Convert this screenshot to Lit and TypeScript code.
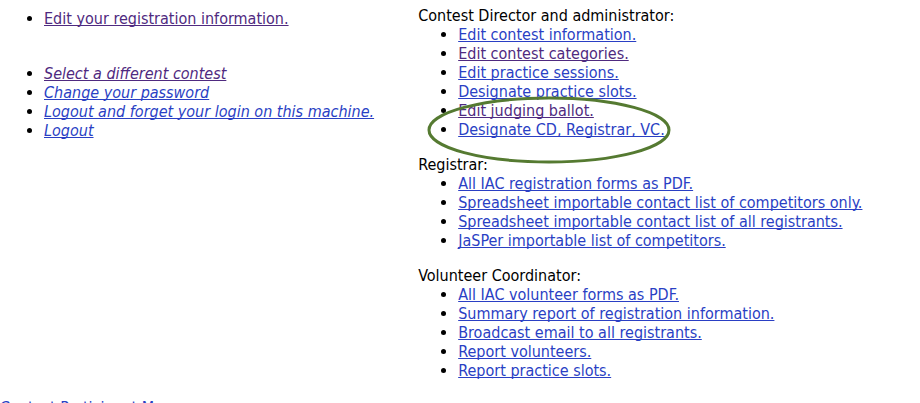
import { LitElement, html, css, svg } from "lit";
import { customElement } from "lit/decorators.js";

interface MenuLink {
  label: string;
  visited?: boolean;
}

const account: MenuLink[] = [{ label: "Edit your registration information.", visited: true }];

const session: MenuLink[] = [
  { label: "Select a different contest", visited: true },
  { label: "Change your password" },
  { label: "Logout and forget your login on this machine." },
  { label: "Logout" },
];

const director: MenuLink[] = [
  { label: "Edit contest information." },
  { label: "Edit contest categories.", visited: true },
  { label: "Edit practice sessions." },
  { label: "Designate practice slots." },
  { label: "Edit judging ballot.", visited: true },
  { label: "Designate CD, Registrar, VC." },
];

const registrar: MenuLink[] = [
  { label: "All IAC registration forms as PDF." },
  { label: "Spreadsheet importable contact list of competitors only." },
  { label: "Spreadsheet importable contact list of all registrants." },
  { label: "JaSPer importable list of competitors." },
];

const volunteer: MenuLink[] = [
  { label: "All IAC volunteer forms as PDF." },
  { label: "Summary report of registration information." },
  { label: "Broadcast email to all registrants." },
  { label: "Report volunteers." },
  { label: "Report practice slots." },
];

const highlight = html`<svg class="highlight" viewBox="0 0 244 68" aria-hidden="true">
  ${svg`<ellipse cx="122" cy="34" rx="120" ry="32" />`}
</svg>`;

@customElement("app-root")
export class AppRoot extends LitElement {
  static styles = css`
    :host {
      display: block;
      background: #fff;
      color: #000;
      font: 16px/19px "DejaVu Sans Condensed", Tahoma, sans-serif;
    }
    .columns {
      display: grid;
      grid-template-columns: 5fr 6fr;
    }
    .personal {
      padding-top: 9px;
    }
    .admin {
      padding-top: 6px;
    }
    .links {
      margin: 0;
      padding-left: 40px;
    }
    .personal .links {
      padding-left: 44px;
    }
    .session {
      margin-top: 36px;
      font-style: italic;
    }
    .group {
      position: relative;
      margin-bottom: 16px;
    }
    .title {
      margin: 0;
      font-size: 16px;
      font-weight: 400;
    }
    a {
      color: #2a3fc4;
      text-decoration: underline;
      text-decoration-thickness: 1px;
      text-decoration-skip-ink: none;
      text-underline-offset: 1px;
    }
    a.visited {
      color: #4f2a80;
    }
    .highlight {
      position: absolute;
      left: 9px;
      bottom: -25px;
      width: 244px;
      height: 68px;
      fill: none;
      stroke: #557a31;
      stroke-width: 3px;
      pointer-events: none;
    }
    .footer {
      padding-top: 2px;
    }
  `;

  private links(items: MenuLink[], extra = "") {
    return html`<ul class="links ${extra}">
      ${items.map(
        (item) => html`<li><a href="#" class=${item.visited ? "visited" : ""}>${item.label}</a></li>`,
      )}
    </ul>`;
  }

  private group(title: string, items: MenuLink[], overlay: unknown = null) {
    return html`<section class="group">
      <h2 class="title">${title}</h2>
      ${this.links(items)}${overlay}
    </section>`;
  }

  render() {
    return html`
      <main class="columns">
        <nav class="personal">${this.links(account)}${this.links(session, "session")}</nav>
        <nav class="admin">
          ${this.group("Contest Director and administrator:", director, highlight)}
          ${this.group("Registrar:", registrar)}
          ${this.group("Volunteer Coordinator:", volunteer)}
        </nav>
      </main>
      <footer class="footer"><a href="#">Contest Participant Menu</a></footer>
    `;
  }
}
